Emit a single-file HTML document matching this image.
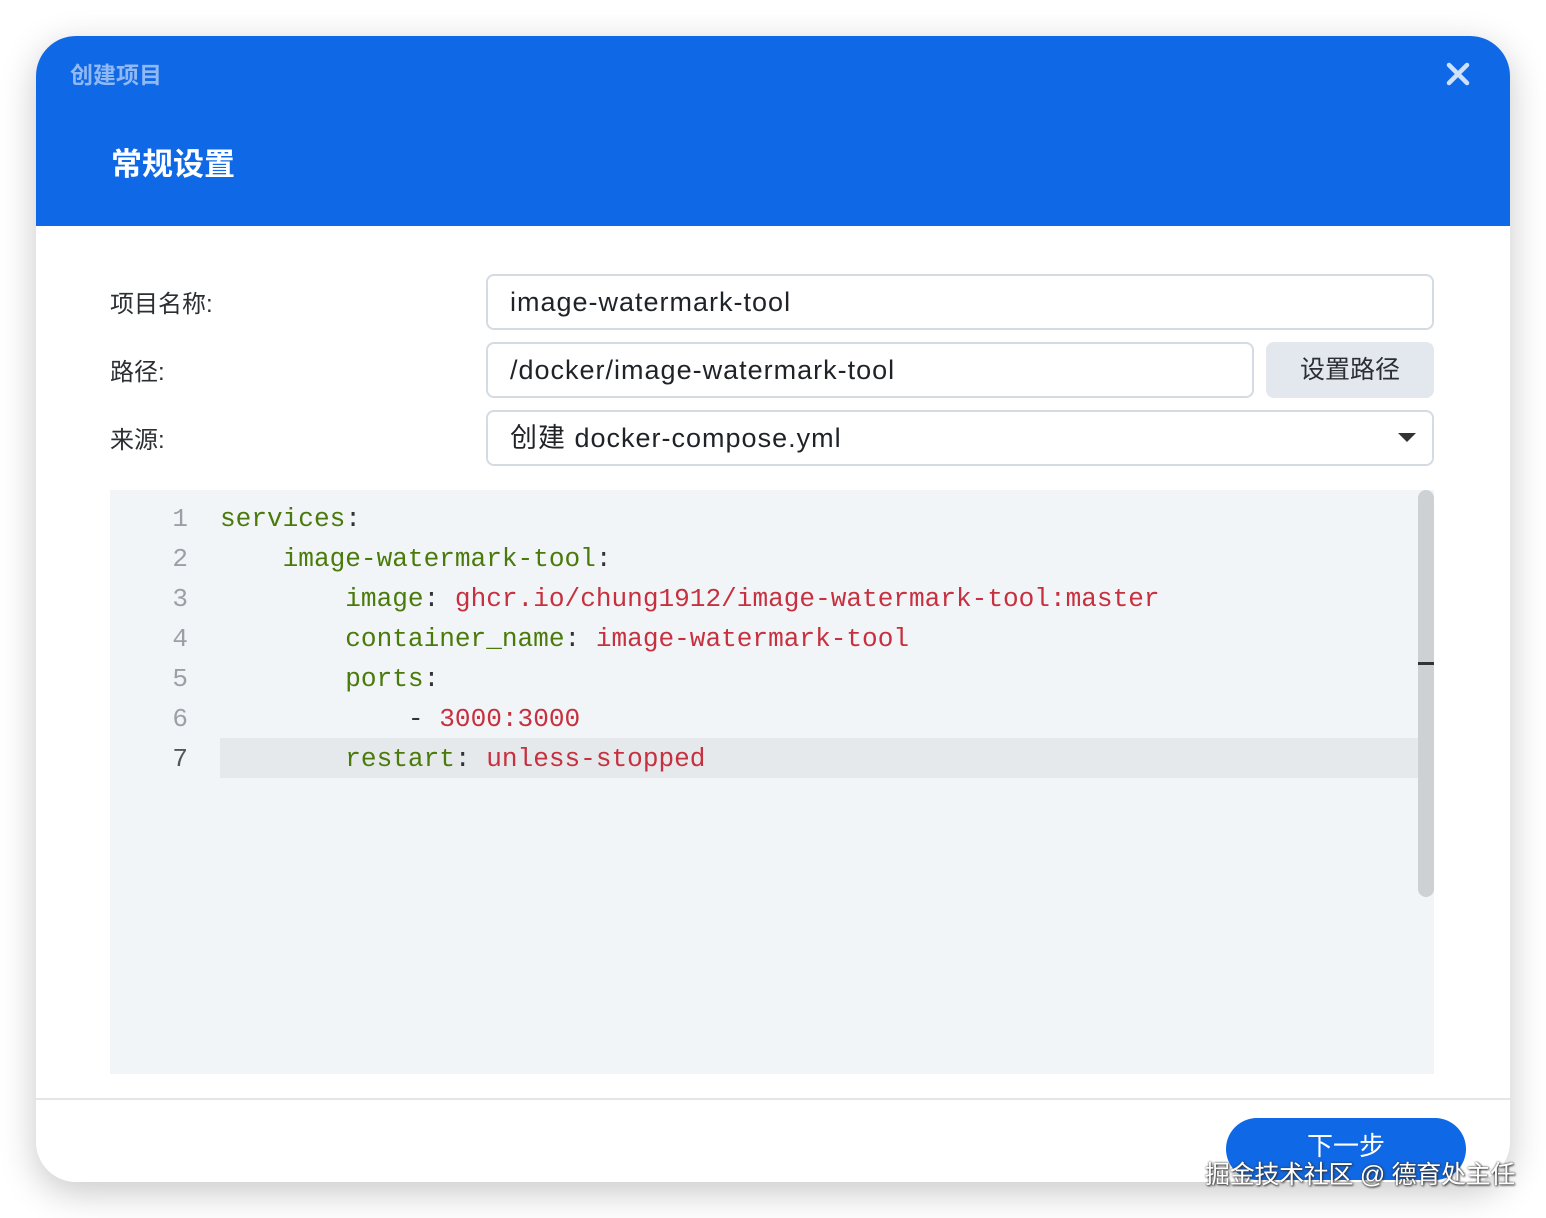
<!DOCTYPE html>
<html><head><meta charset="utf-8"><style>
*{margin:0;padding:0;box-sizing:border-box}
body{width:1546px;height:1218px;background:#fff;position:relative;overflow:hidden;font-family:"Liberation Sans","Noto Sans CJK SC",sans-serif}
.dlg{position:absolute;left:36px;top:36px;width:1474px;height:1146px;border-radius:40px;overflow:hidden;background:#fff;box-shadow:0 10px 36px rgba(0,0,0,.22)}
.hdr{position:absolute;left:0;top:0;width:1474px;height:190px;background:#0f68e5}
.t1{position:absolute;left:34px;top:20px;font-size:23px;font-weight:bold;color:#8fb8f4}
.t2{position:absolute;left:75px;top:103px;font-size:31px;font-weight:bold;color:#fff}
.x{position:absolute;left:1410px;top:26px;width:24px;height:24px}
.lbl{position:absolute;left:74px;font-size:24px;color:#2b2f33}
.inp{position:absolute;left:450px;height:56px;border:2px solid #d5dbe3;border-radius:8px;font-size:27px;letter-spacing:1px;color:#1f2328;padding-left:22px;line-height:52px;background:#fff}
.btn{position:absolute;left:1230px;top:306px;width:168px;height:56px;background:#e3e8ee;border-radius:8px;font-size:25px;color:#2b2f33;text-align:center;line-height:56px}
.code{position:absolute;left:74px;top:454px;width:1324px;height:584px;background:#f1f5f8}
.ln{position:absolute;left:0;width:78px;text-align:right;font-family:"Liberation Mono",monospace;font-size:26px;color:#9aa0a6}
.cl{position:absolute;left:110px;font-family:"Liberation Mono",monospace;font-size:26.1px;color:#4a7a0a;white-space:pre}
.r{color:#c7303e}.p{color:#333}
.hl{position:absolute;left:110px;top:248px;width:1214px;height:40px;background:#e6e9ec}
.sb{position:absolute;left:1308px;top:0;width:16px;height:407px;background:#cdd1d4;border-radius:8px}
.foot{position:absolute;left:0;top:1062px;width:1474px;height:2px;background:#e4e7ea}
.nx{position:absolute;left:1190px;top:1082px;width:240px;height:62px;border-radius:31px;background:#0f68e5;color:#fff;font-size:26px;text-align:center;line-height:56px}
.wm{position:absolute;left:1205px;top:1155px;font-size:25px;color:#fff;text-shadow:0 0 2px #333,1px 1px 2px #333;letter-spacing:-0.3px}
</style></head><body>
<div class="dlg">
<div class="hdr">
<div class="t1">创建项目</div>
<div class="t2">常规设置</div>
<svg class="x" viewBox="0 0 24 24"><path d="M3 3L21 21M21 3L3 21" stroke="#cfe0fb" stroke-width="4.5" stroke-linecap="round"/></svg>
</div>
<div class="lbl" style="top:248px">项目名称:</div>
<div class="inp" style="top:238px;width:948px">image-watermark-tool</div>
<div class="lbl" style="top:316px">路径:</div>
<div class="inp" style="top:306px;width:768px">/docker/image-watermark-tool</div>
<div class="btn">设置路径</div>
<div class="lbl" style="top:384px">来源:</div>
<div class="inp" style="top:374px;width:948px">创建 docker-compose.yml
<svg style="position:absolute;right:16px;top:21px" width="18" height="10" viewBox="0 0 18 10"><path d="M0 0H18L9 9Z" fill="#333"/></svg></div>
<div class="code">
<div class="hl"></div>
<div class="ln" style="top:14px">1</div><div class="ln" style="top:54px">2</div><div class="ln" style="top:94px">3</div><div class="ln" style="top:134px">4</div><div class="ln" style="top:174px">5</div><div class="ln" style="top:214px">6</div><div class="ln" style="top:254px;color:#555">7</div>
<div class="cl" style="top:14px">services<span class="p">:</span></div>
<div class="cl" style="top:54px">    image-watermark-tool<span class="p">:</span></div>
<div class="cl" style="top:94px">        image<span class="p">:</span> <span class="r">ghcr.io/chung1912/image-watermark-tool:master</span></div>
<div class="cl" style="top:134px">        container_name<span class="p">:</span> <span class="r">image-watermark-tool</span></div>
<div class="cl" style="top:174px">        ports<span class="p">:</span></div>
<div class="cl" style="top:214px">            <span class="p">-</span> <span class="r">3000:3000</span></div>
<div class="cl" style="top:254px">        restart<span class="p">:</span> <span class="r">unless-stopped</span></div>
<div class="sb"><div style="position:absolute;left:0;top:172px;width:16px;height:3px;background:#333"></div></div>
</div>
<div class="foot"></div>
<div class="nx">下一步</div>
</div>
<div class="wm">掘金技术社区 @ 德育处主任</div>
</body></html>
